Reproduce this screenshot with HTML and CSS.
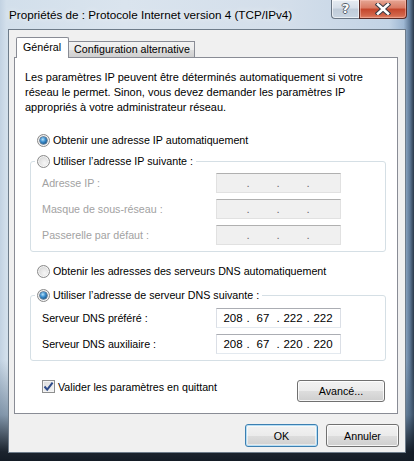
FILE: index.html
```html
<!DOCTYPE html>
<html lang="fr">
<head>
<meta charset="utf-8">
<title>Propriétés de : Protocole Internet version 4 (TCP/IPv4)</title>
<link rel="stylesheet" href="styles.css">
</head>
<body>
<div class="window">
  <div class="titlebar">
    <span class="title">Propriétés de : Protocole Internet version 4 (TCP/IPv4)</span>
    <div class="caption-btns">
      <div class="cap-btn help"><span class="qmark">?</span></div>
      <div class="cap-btn close">
        <svg width="16" height="12" viewBox="0 0 16 12">
          <path d="M3 1.5 L13 10.5 M13 1.5 L3 10.5" stroke="#3a3a44" stroke-width="4.6" stroke-linecap="square" fill="none"/>
          <path d="M3 1.5 L13 10.5 M13 1.5 L3 10.5" stroke="#ffffff" stroke-width="2.6" stroke-linecap="square" fill="none"/>
        </svg>
      </div>
    </div>
  </div>
  <div class="client">
    <div class="tabs">
      <div class="tab active">Général</div>
      <div class="tab">Configuration alternative</div>
    </div>
    <div class="panel">
      <p class="intro">Les paramètres IP peuvent être déterminés automatiquement si votre<br>réseau le permet. Sinon, vous devez demander les paramètres IP<br>appropriés à votre administrateur réseau.</p>

      <div class="option first"><span class="radio checked"></span><span>Obtenir une adresse IP automatiquement</span></div>

      <fieldset class="group g1">
        <legend><span class="radio"></span><span>Utiliser l’adresse IP suivante :</span></legend>
        <div class="field disabled"><span class="lbl">Adresse IP :</span><div class="ip"><span class="oct"></span><span class="dot">.</span><span class="oct"></span><span class="dot">.</span><span class="oct"></span><span class="dot">.</span><span class="oct"></span></div></div>
        <div class="field disabled"><span class="lbl">Masque de sous-réseau :</span><div class="ip"><span class="oct"></span><span class="dot">.</span><span class="oct"></span><span class="dot">.</span><span class="oct"></span><span class="dot">.</span><span class="oct"></span></div></div>
        <div class="field disabled"><span class="lbl">Passerelle par défaut :</span><div class="ip"><span class="oct"></span><span class="dot">.</span><span class="oct"></span><span class="dot">.</span><span class="oct"></span><span class="dot">.</span><span class="oct"></span></div></div>
      </fieldset>

      <div class="option dns-auto"><span class="radio"></span><span>Obtenir les adresses des serveurs DNS automatiquement</span></div>

      <fieldset class="group g2">
        <legend><span class="radio checked"></span><span>Utiliser l’adresse de serveur DNS suivante :</span></legend>
        <div class="field"><span class="lbl">Serveur DNS préféré :</span><div class="ip"><span class="oct">208</span><span class="dot">.</span><span class="oct">67</span><span class="dot">.</span><span class="oct">222</span><span class="dot">.</span><span class="oct">222</span></div></div>
        <div class="field"><span class="lbl">Serveur DNS auxiliaire :</span><div class="ip"><span class="oct">208</span><span class="dot">.</span><span class="oct">67</span><span class="dot">.</span><span class="oct">220</span><span class="dot">.</span><span class="oct">220</span></div></div>
      </fieldset>

      <div class="bottom-row">
        <div class="check-opt">
          <span class="checkbox">
            <svg width="11" height="11" viewBox="0 0 11 11"><path d="M1.5 5.5 L4.2 8.6 L9.6 1.6" stroke="#2e4b8a" stroke-width="2" fill="none"/></svg>
          </span>
          <span>Valider les paramètres en quittant</span>
        </div>
        <button class="btn advanced">Avancé...</button>
      </div>
    </div>
    <div class="dialog-btns">
      <button class="btn default">OK</button>
      <button class="btn">Annuler</button>
    </div>
  </div>
</div>
</body>
</html>
```

FILE: styles.css
```css
* { box-sizing: border-box; }
html, body {
  margin: 0;
  padding: 0;
  width: 414px;
  height: 461px;
  overflow: hidden;
  background: #1d2733;
}
body {
  font-family: "Liberation Sans", Arial, sans-serif;
  font-size: 10.7px;
  color: #000;
}
.window {
  width: 414px;
  height: 461px;
  padding: 0 8px 8px 8px;
  display: flex;
  flex-direction: column;
  background:
    linear-gradient(to bottom, rgba(0,0,0,0) 0, rgba(0,0,0,0) 78%, rgba(70,95,120,0.55) 90%, rgba(18,26,36,0.95) 98%, #141c26 100%),
    linear-gradient(to right, #c2d2e2 0, #d2dfeb 1.5%, #dae4ee 30%, #d3deea 70%, #c2d3e5 94%, #9fb8d3 97.5%, #5f7a98 99%, #2a3848 100%);
}
.titlebar {
  height: 29px;
  display: flex;
  justify-content: space-between;
  align-items: flex-start;
  flex-shrink: 0;
}
.title {
  padding: 8px 0 0 1px;
  font-size: 11.7px;
  line-height: 14px;
  color: #000;
  text-shadow: 0 0 6px rgba(255,255,255,0.9);
  white-space: nowrap;
}
.caption-btns {
  display: flex;
  margin-right: -1px;
}
.cap-btn {
  height: 19px;
  display: flex;
  align-items: center;
  justify-content: center;
  border: 1px solid #6a7684;
  border-top: none;
}
.help {
  width: 28px;
  border-radius: 0 0 0 4px;
  border-right: none;
  background: linear-gradient(to bottom, #e6ecf2 0, #d6dee8 45%, #bfcbd8 50%, #c9d5e2 100%);
  box-shadow: inset 0 0 0 1px rgba(255,255,255,0.6);
}
.qmark {
  font-family: "DejaVu Sans", sans-serif;
  font-weight: bold;
  font-size: 13px;
  color: #fff;
  line-height: 1;
  text-shadow: -1px 0 #56606c, 1px 0 #56606c, 0 -1px #56606c, 0 1px #56606c;
  margin-top: -1px;
}
.close {
  width: 48px;
  border-radius: 0 0 4px 0;
  border-color: #5a2a24;
  background: linear-gradient(to bottom, #e5a694 0, #d97a63 45%, #c4452b 50%, #d2654a 85%, #e0876b 100%);
  box-shadow: inset 0 0 0 1px rgba(255,200,190,0.45);
}
.client {
  flex: 1;
  border: 1px solid #6e7c8a;
  background: #f0f0f0;
  display: flex;
  flex-direction: column;
}
.tabs {
  display: flex;
  align-items: flex-end;
  height: 27px;
  padding-left: 7px;
  position: relative;
  z-index: 1;
}
.tab {
  height: 16px;
  padding: 0 4px 0 5px;
  line-height: 15px;
  border: 1px solid #898c95;
  border-bottom: none;
  background: linear-gradient(to bottom, #f2f2f2 0, #ebebeb 50%, #dddddd 51%, #cfcfcf 100%);
  white-space: nowrap;
}
.tab + .tab { border-left: none; }
.tab.active {
  height: 21px;
  margin-bottom: -1px;
  padding: 0 7px 0 6px;
  line-height: 18px;
  background: #fff;
  border-radius: 2px 2px 0 0;
}
.panel {
  margin: 0 7px 0 5px;
  height: 357px;
  border: 1px solid #898c95;
  background: #fff;
  display: flex;
  flex-direction: column;
}
.intro {
  margin: 12px 0 0 10px;
  font-size: 11px;
  line-height: 15px;
  white-space: nowrap;
}
.option {
  display: flex;
  align-items: center;
  height: 16px;
  padding-left: 22px;
  gap: 3px;
  white-space: nowrap;
}
.option.first { margin-top: 17px; }
.option.dns-auto { margin-top: 11px; }
.radio {
  width: 13px;
  height: 13px;
  border-radius: 50%;
  border: 1px solid #8a8a8a;
  background: radial-gradient(circle at 60% 65%, #f6f6f6 0, #e4e4e4 45%, #c8c8c8 100%);
  box-shadow: inset 0 0 0 1px rgba(255,255,255,0.7);
  display: flex;
  align-items: center;
  justify-content: center;
  flex-shrink: 0;
}
.radio.checked::after {
  content: "";
  width: 7px;
  height: 7px;
  border-radius: 50%;
  background: radial-gradient(circle at 40% 35%, #b6e4fb 0, #3d8fcf 40%, #104b7e 85%);
  box-shadow: 0 0 0 0.5px #123b63;
}
.group {
  border: 1px solid #d5dfe5;
  border-radius: 3px;
  margin: 5px 11px 0 15px;
  padding: 4px 0 6px 0;
  min-width: 0;
}
.group.g2 { margin-top: 8px; padding-top: 5px; padding-bottom: 6px; }
.group legend {
  display: flex;
  align-items: center;
  gap: 3px;
  height: 16px;
  margin-left: 4px;
  padding: 0 3px 0 2px;
  white-space: nowrap;
}
.field {
  display: grid;
  grid-template-columns: 174px 125px;
  align-items: center;
  height: 20px;
  margin-left: 11px;
}
.field + .field { margin-top: 6px; }
.field.disabled .lbl { color: #a2a2a2; }
.ip {
  height: 20px;
  display: flex;
  align-items: center;
  padding-left: 3px;
  background: #fff;
  border: 1px solid #dbdfe6;
  border-top-color: #abadb3;
  border-bottom-color: #e3e9ef;
  font-size: 11.5px;
}
.field.disabled .ip {
  background: #f0f0f0;
  border-color: #e1e1e1;
  border-top-color: #b0b0b0;
  color: #6d6d6d;
}
.oct {
  width: 26px;
  text-align: center;
}
.dot {
  width: 4px;
  text-align: center;
}
.bottom-row {
  display: flex;
  justify-content: space-between;
  align-items: flex-start;
  margin-top: 19px;
  padding: 0 12px 0 27px;
}
.check-opt {
  display: flex;
  align-items: center;
  gap: 3px;
  height: 13px;
  white-space: nowrap;
}
.check-opt span:last-child { margin-top: 1px; }
.checkbox {
  width: 13px;
  height: 13px;
  border: 1px solid #8e8f8f;
  background: linear-gradient(135deg, #dcdcdc 0, #f4f4f4 100%);
  box-shadow: inset 0 0 0 1px #f4f4f4;
  display: flex;
  align-items: center;
  justify-content: center;
  flex-shrink: 0;
}
.checkbox svg { display: block; }
.btn {
  font-family: "Liberation Sans", Arial, sans-serif;
  font-size: 10.7px;
  color: #000;
  height: 23px;
  padding: 0;
  border: 1px solid #707070;
  border-radius: 3px;
  background: linear-gradient(to bottom, #f2f2f2 0, #ebebeb 50%, #dddddd 51%, #cfcfcf 100%);
  box-shadow: inset 0 0 0 1px rgba(255,255,255,0.8);
}
.advanced { width: 88px; height: 22px; }
.dialog-btns {
  display: flex;
  justify-content: flex-end;
  gap: 8px;
  margin-top: 10px;
  padding-right: 6px;
}
.dialog-btns .btn { width: 73px; }
.btn.default {
  border-color: #3c7fb1;
  box-shadow: inset 0 0 0 1px #b6def5, inset 0 0 0 2px rgba(255,255,255,0.5);
}
```
